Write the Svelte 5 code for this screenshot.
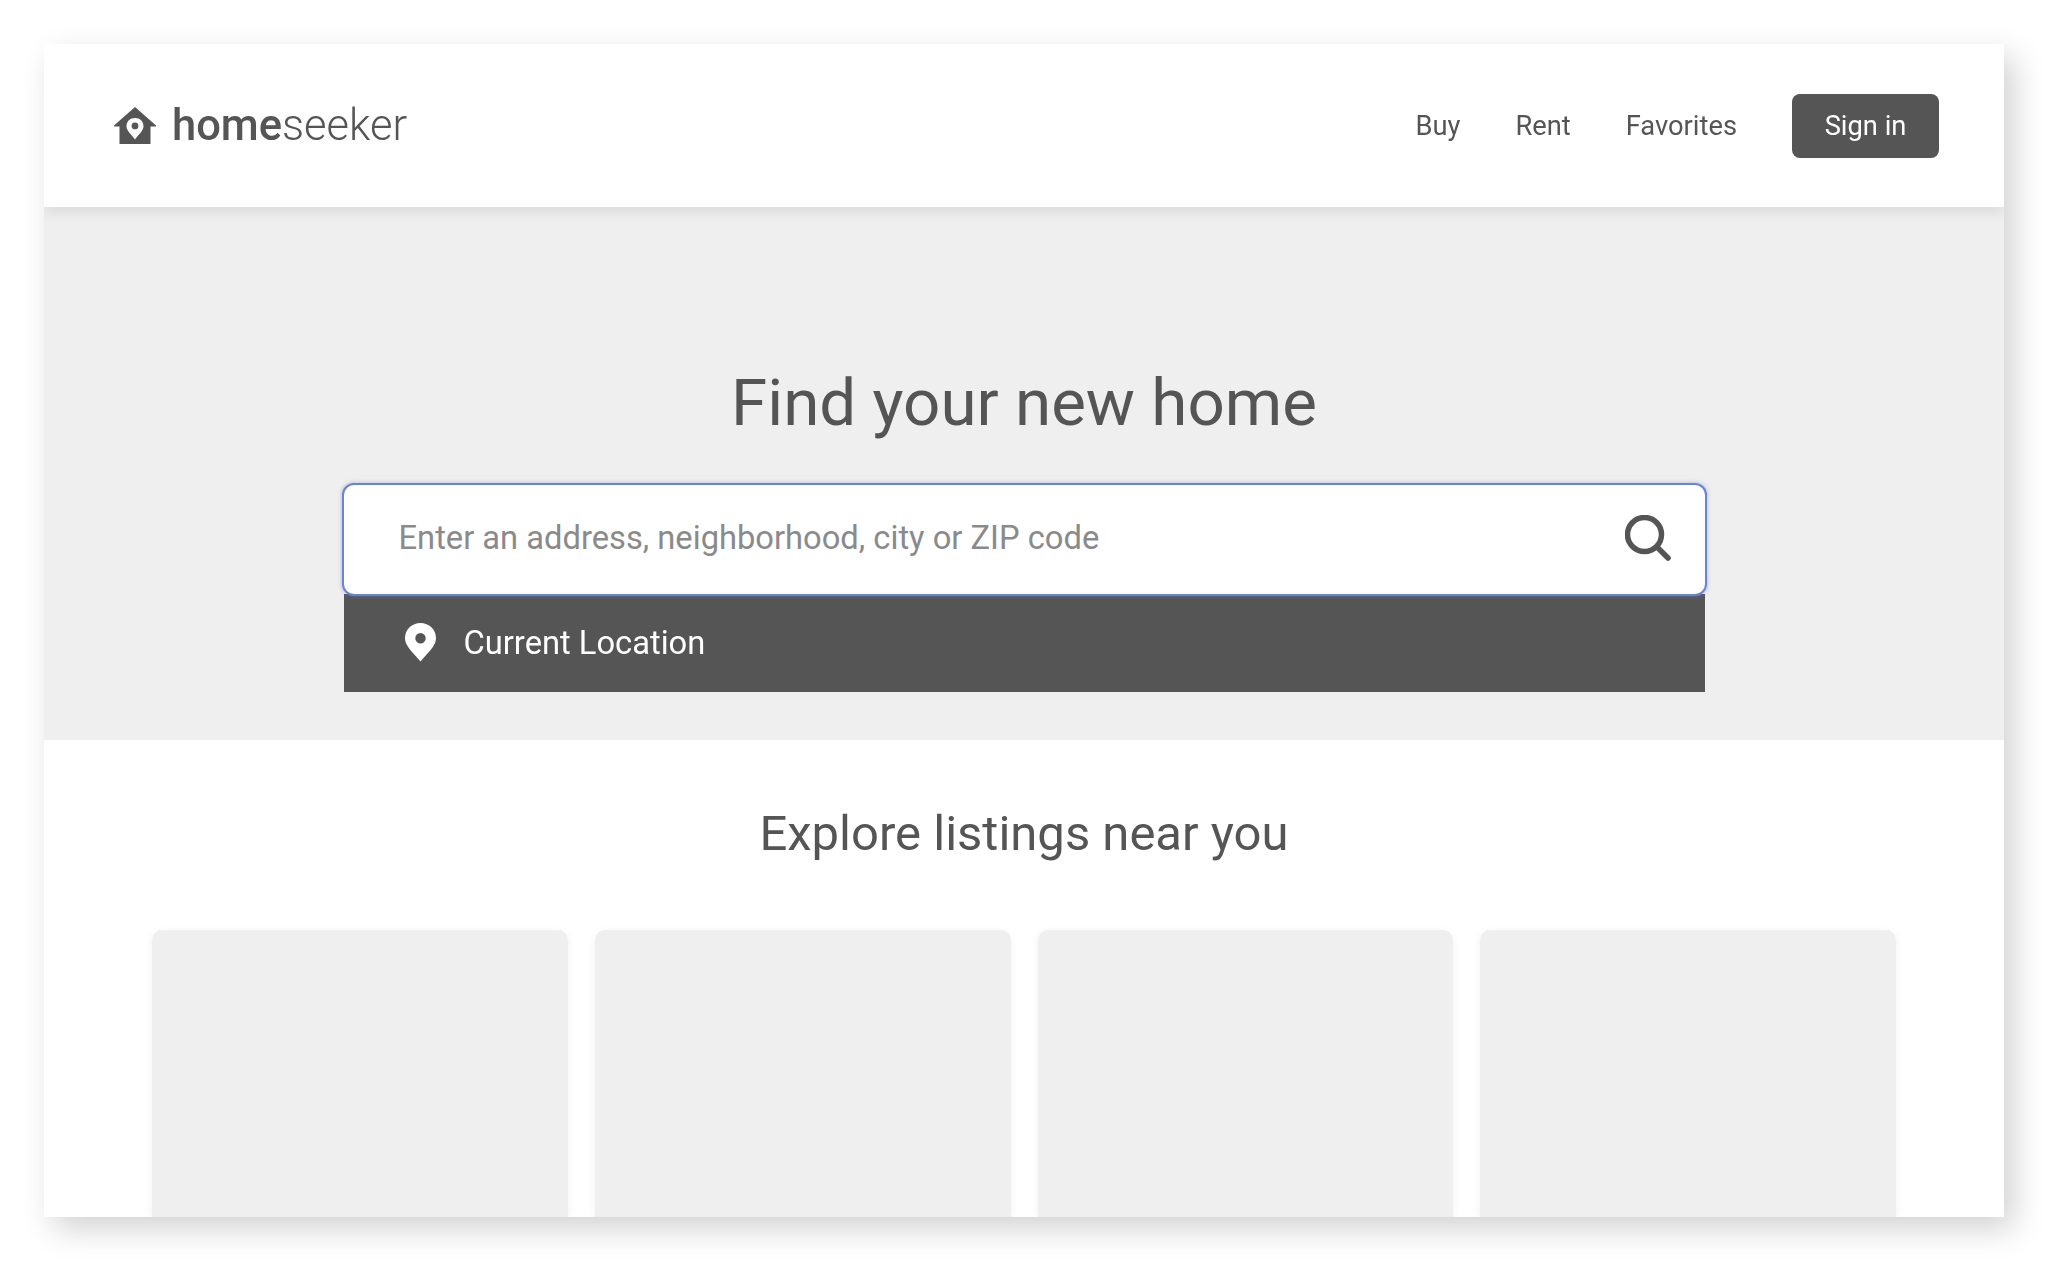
<script>
  const cards = [1, 2, 3, 4];
</script>

<div class="stage">
  <div class="page">
    <header class="header">
      <a class="logo" href="#home">
        <svg class="logo-icon" viewBox="0 0 42 37" aria-hidden="true">
          <path fill-rule="evenodd" fill="#555" d="M21 0 L42 18.5 L42 19.5 L36.5 19.5 L36.5 37 L5.5 37 L5.5 19.5 L0 19.5 L0 18.5 Z M21 11 C16 11 12.5 14.5 12.5 19.3 C12.5 24 17.5 27.5 21 32.5 C24.5 27.5 29.5 24 29.5 19.3 C29.5 14.5 26 11 21 11 Z M21 15.5 A3.4 3.4 0 1 1 21 22.3 A3.4 3.4 0 1 1 21 15.5 Z" />
        </svg>
        <span class="wordmark"><b>home</b>seeker</span>
      </a>
      <nav class="nav">
        <a href="#buy">Buy</a>
        <a href="#rent">Rent</a>
        <a href="#favorites">Favorites</a>
        <button class="signin" type="button">Sign in</button>
      </nav>
    </header>

    <section class="hero">
      <h1>Find your new home</h1>
      <div class="search-wrap">
        <div class="search">
          <span class="placeholder">Enter an address, neighborhood, city or ZIP code</span>
          <svg class="search-icon" viewBox="0 0 46 46" aria-hidden="true">
            <circle cx="19.5" cy="19.5" r="17" fill="none" stroke="#555" stroke-width="5.5" />
            <line x1="32" y1="32" x2="43" y2="43" stroke="#555" stroke-width="5.5" stroke-linecap="round" />
          </svg>
        </div>
        <div class="location">
          <svg class="pin" viewBox="0 0 31 39" aria-hidden="true">
            <path fill-rule="evenodd" fill="#fff" d="M15.5 0 C7 0 0 6.5 0 15 C0 22 5 26.5 15.5 38.5 C26 26.5 31 22 31 15 C31 6.5 24 0 15.5 0 Z M15.5 10 A5.2 5.2 0 1 1 15.5 20.4 A5.2 5.2 0 1 1 15.5 10 Z" />
          </svg>
          <span>Current Location</span>
        </div>
      </div>
    </section>

    <section class="explore">
      <h2>Explore listings near you</h2>
      <div class="cards">
        {#each cards as card (card)}
          <div class="card"></div>
        {/each}
      </div>
    </section>
  </div>
</div>

<style>
  :global(body) {
    margin: 0;
    background: #fff;
  }
  .stage {
    height: 1261px;
    box-sizing: border-box;
    padding: 44px;
    font-family: Roboto, "Liberation Sans", sans-serif;
    color: #555;
    overflow: hidden;
    filter: blur(0.6px);
  }
  .page {
    height: 1173px;
    background: #fff;
    overflow: hidden;
    display: flex;
    flex-direction: column;
    box-shadow: 10px 12px 30px rgba(0, 0, 0, 0.18);
  }
  .header {
    position: relative;
    z-index: 1;
    flex: none;
    height: 163px;
    box-sizing: border-box;
    padding: 0 65px 0 70px;
    display: flex;
    align-items: center;
    justify-content: space-between;
    background: #fff;
    box-shadow: 0 4px 14px rgba(0, 0, 0, 0.1);
  }
  .logo {
    display: flex;
    align-items: center;
    gap: 16px;
    color: #555;
    text-decoration: none;
  }
  .logo-icon {
    width: 42px;
    height: 37px;
    display: block;
  }
  .wordmark {
    font-size: 43.5px;
    font-weight: 300;
    line-height: 1;
  }
  .wordmark b {
    font-weight: 500;
  }
  .nav {
    display: flex;
    align-items: center;
    gap: 55px;
    font-size: 27.3px;
  }
  .nav a {
    color: #555;
    text-decoration: none;
  }
  .signin {
    width: 147px;
    height: 64px;
    border: 0;
    border-radius: 8px;
    background: #555;
    color: #fff;
    font: inherit;
  }
  .hero {
    flex: none;
    height: 533px;
    box-sizing: border-box;
    background: #efefef;
    padding-top: 158px;
    display: flex;
    flex-direction: column;
    align-items: center;
  }
  h1 {
    margin: 0 0 44px;
    font-size: 65.5px;
    font-weight: 400;
    line-height: 76px;
  }
  .search-wrap {
    width: 1361px;
  }
  .search {
    position: relative;
    z-index: 1;
    height: 109px;
    box-sizing: border-box;
    padding: 0 34px 3px 55px;
    display: flex;
    align-items: center;
    justify-content: space-between;
    background: #fff;
    border-radius: 10px;
    box-shadow: 0 0 0 2px #6b84d2, 0 0 4px 2px rgba(107, 132, 210, 0.55);
  }
  .placeholder {
    font-size: 32.7px;
    color: #8a8a8a;
  }
  .search-icon {
    width: 46px;
    height: 46px;
    display: block;
  }
  .location {
    height: 98px;
    box-sizing: border-box;
    padding: 0 0 1px 61px;
    display: flex;
    align-items: center;
    gap: 28px;
    background: #555;
    color: #fff;
    font-size: 32.7px;
  }
  .pin {
    width: 31px;
    height: 39px;
    display: block;
  }
  .explore {
    flex: 1;
    min-height: 0;
    padding-top: 64px;
    display: flex;
    flex-direction: column;
    align-items: center;
  }
  h2 {
    margin: 0 0 66px;
    font-size: 49px;
    font-weight: 400;
    line-height: 60px;
  }
  .cards {
    width: 1744px;
    flex: 1;
    display: grid;
    grid-template-columns: repeat(4, 1fr);
    gap: 27px;
  }
  .card {
    background: #efefef;
    border-radius: 10px 10px 0 0;
    box-shadow: 0 2px 8px rgba(0, 0, 0, 0.06);
  }
</style>
